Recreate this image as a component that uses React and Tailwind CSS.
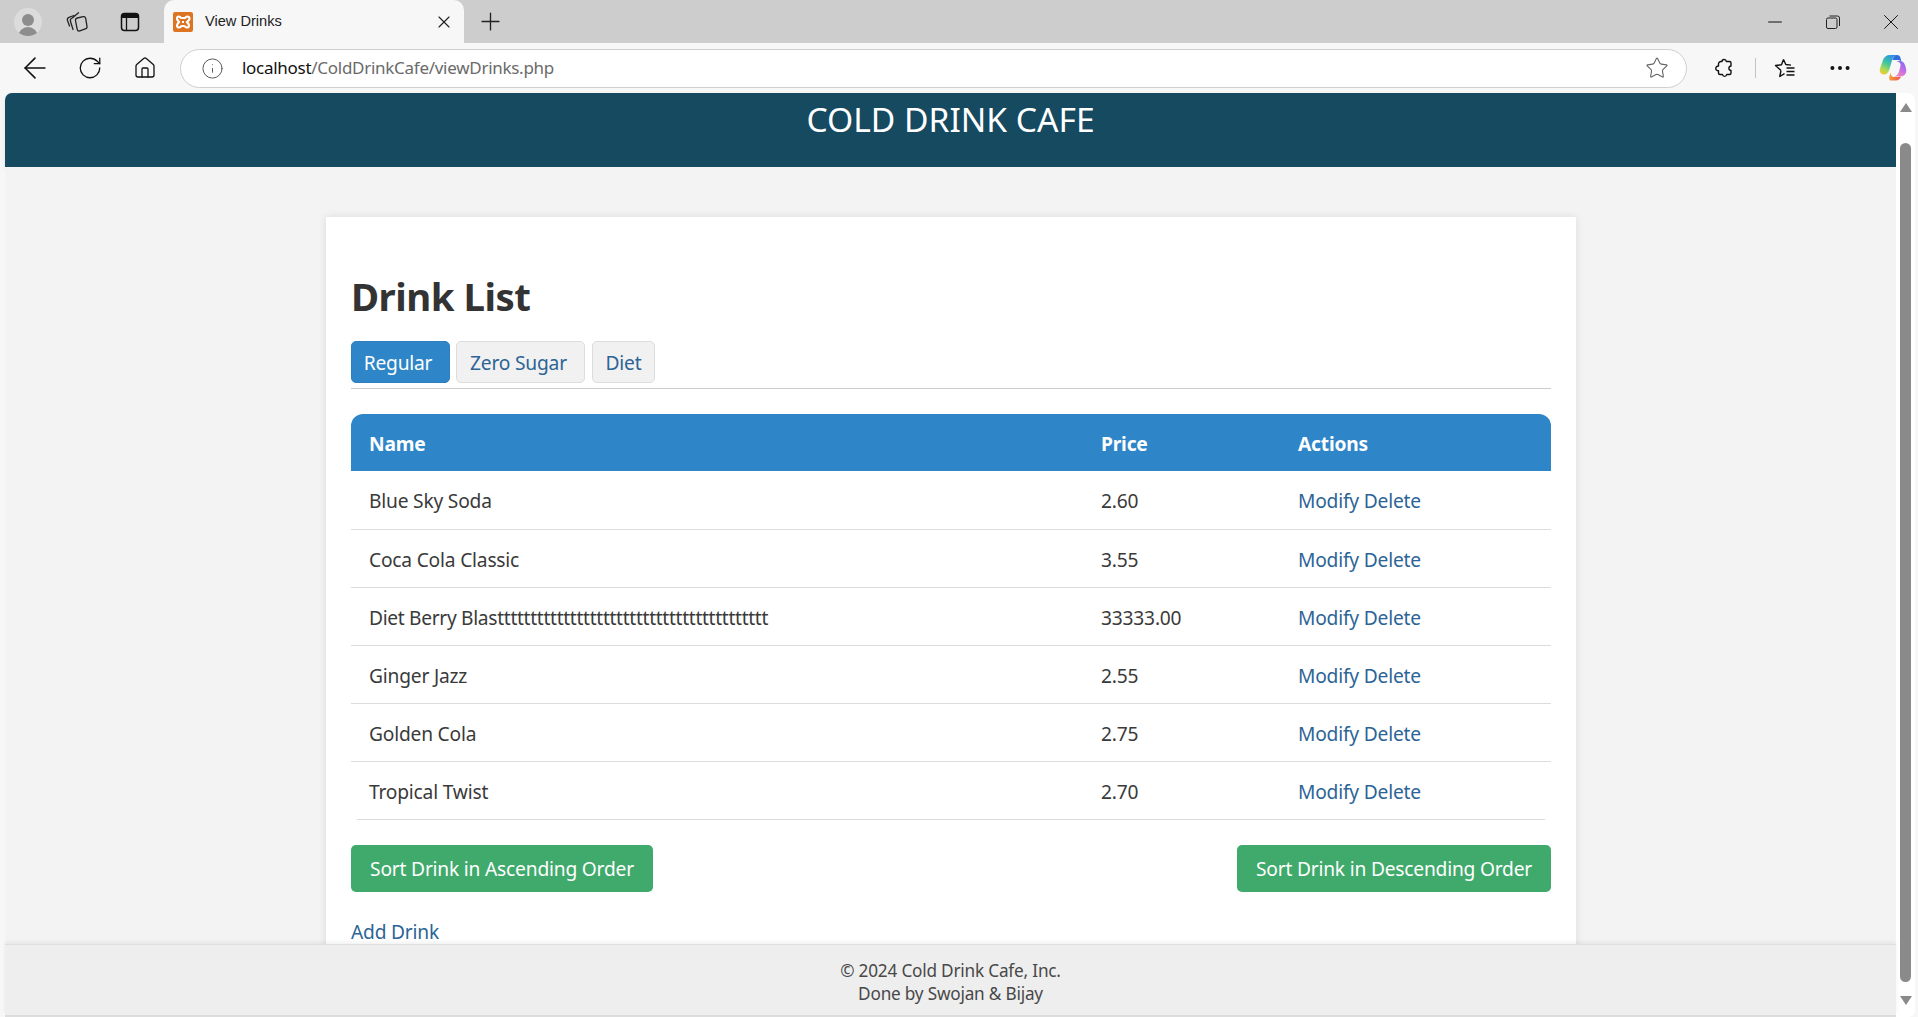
import React from "react";
import { ArrowLeft, RotateCw, House, Info, Star, MoreHorizontal, X, Plus, Minus } from "lucide-react";

const drinks = [
  { name: "Blue Sky Soda", price: "2.60" },
  { name: "Coca Cola Classic", price: "3.55" },
  { name: "Diet Berry Blasttttttttttttttttttttttttttttttttttttttttt", price: "33333.00", tight: true },
  { name: "Ginger Jazz", price: "2.55" },
  { name: "Golden Cola", price: "2.75" },
  { name: "Tropical Twist", price: "2.70" },
];

const CollectionsIcon = () => (
  <svg width="22" height="22" viewBox="0 0 22 22" fill="none" stroke="#222" strokeWidth="1.300" strokeLinecap="round" strokeLinejoin="round">
    <path d="M3.500 15L1.500 9.500C1 8 1.800 6.800 3 6.300L8 4.500" />
    <path d="M7 18.500L4.500 10.500C4 8.800 4.800 7.500 6.300 7L12.500 1.800" />
    <path d="M9.500 9.500c-.2-1.200.5-2.200 1.700-2.500l6-1.300c1.200-.2 2.200.5 2.500 1.700l1.300 8c.2 1.200-.5 2.200-1.700 2.500l-5.500 2c-1.200.3-2.300-.4-2.600-1.600z" />
  </svg>
);

const TabsIcon = () => (
  <svg width="20" height="20" viewBox="0 0 20 20" fill="none">
    <rect x="1.500" y="1.500" width="17" height="17" rx="3" stroke="#111" strokeWidth="1.500" />
    <path d="M1.500 4.500a3 3 0 0 1 3-3h11a3 3 0 0 1 3 3v1.500h-17z" fill="#111" />
    <path d="M6.500 6v12" stroke="#111" strokeWidth="1.300" />
  </svg>
);

const XamppIcon = () => (
  <svg width="20" height="20" viewBox="0 0 20 20">
    <rect width="20" height="20" rx="2" fill="#dd7421" />
    <path
      d="M5.500 4.500c1.500 0 2 1.500 3 1.500h3c1 0 1.500-1.500 3-1.500 2 0 2.500 2 1.500 3.500L14 10l1.500 2c1 1.500.5 3.500-1.500 3.500-1.500 0-2-1.500-3-1.500H9c-1 0-1.500 1.500-3 1.500-2 0-2.500-2-1.500-3.500L6 10 4.500 8c-1-1.500-.5-3.500 1-3.500z"
      fill="none"
      stroke="#fff"
      strokeWidth="2.200"
    />
    <path d="M9 10h2" stroke="#fff" strokeWidth="2" />
  </svg>
);

const RestoreIcon = () => (
  <svg width="14" height="14" viewBox="0 0 14 14" fill="none" stroke="#222" strokeWidth="1">
    <rect x="0.500" y="3" width="10.500" height="10.500" rx="1.500" />
    <path d="M3.500 1h8a2 2 0 0 1 2 2v8" />
  </svg>
);

const PuzzleIcon = () => (
  <svg width="20" height="20" viewBox="0 0 20 20" fill="none" stroke="#111" strokeWidth="1.400" strokeLinejoin="round">
    <path d="M8 3.500C8 1 12 .8 12.300 3.500h3.200a1.500 1.500 0 0 1 1.500 1.500v3c-2.800.3-2.800 4.200 0 4.500v2.500a1.500 1.500 0 0 1-1.500 1.500h-2.800c-.4 2.500-3.800 2.500-4.200 0H6a1.500 1.500 0 0 1-1.500-1.500v-2.200c-3.600 0-3.600-4.800 0-4.800V6A2.500 2.500 0 0 1 7 3.500z" />
  </svg>
);

const FavoritesIcon = () => (
  <svg width="22" height="20" viewBox="0 0 22 20" fill="none" stroke="#111" strokeWidth="1.400" strokeLinejoin="round">
    <path d="M9.500 1.500l2.300 5 5.200.6M7 12.500l-1.200 6 4.700-2.800M7 12.500L1.500 7.500l6-.7 2-5.300" />
    <path d="M12.500 10h8M12.500 13.500h8M12.500 17h8" strokeWidth="1.500" />
  </svg>
);

const CopilotIcon = () => (
  <svg width="28" height="28" viewBox="0 0 28 28">
    <defs>
      <linearGradient id="copilotA" x1="0.700" y1="0" x2="0.200" y2="1">
        <stop offset="0" stopColor="#2b8fe8" />
        <stop offset="0.450" stopColor="#3fc7a0" />
        <stop offset="0.800" stopColor="#b9d94a" />
        <stop offset="1" stopColor="#f4c63a" />
      </linearGradient>
      <linearGradient id="copilotB" x1="0.800" y1="0" x2="0.300" y2="1">
        <stop offset="0" stopColor="#7d6cf0" />
        <stop offset="0.500" stopColor="#c46be6" />
        <stop offset="1" stopColor="#f08ab8" />
      </linearGradient>
      <linearGradient id="copilotC" x1="0" y1="0" x2="1" y2="0">
        <stop offset="0" stopColor="#f6a03a" />
        <stop offset="1" stopColor="#e8504f" />
      </linearGradient>
    </defs>
    <path d="M11 1h7c-3 .5-4 2.500-5 5.500L10.500 15c-1 3.500-2.500 5.500-5.500 5.500-3 0-5-3-4-6L4 6c1-3 3.500-5 7-5z" fill="url(#copilotA)" />
    <path d="M17 7h4c2.500 0 4 1.500 5 4l1 3.500c1 4-1 8-5.500 8H15c3-.5 4.500-3 5.300-6l1.200-5C22 9.500 20 7.500 17 7z" fill="url(#copilotB)" />
    <path d="M11 26.500h6c2 0 4-1.500 5-4-1.500.6-3 .6-5 .6h-2c-2 0-3-1.500-3.500-4l-1 3c-.6 2 -.4 3.500.5 4.400z" fill="url(#copilotC)" />
    <path d="M18 1c2 0 3 1 3.500 3l.8 3.300C21 6.300 19.500 6 17.500 6H13.500C14.500 3 15.500 1 18 1z" fill="#2f6fdc" />
  </svg>
);

function BrowserChrome() {
  return (
    <div className="font-['Noto_Sans',sans-serif]">
      <div className="flex h-[43px] bg-[#cdcdcd] items-center">
        <div className="ml-[14px] w-[28px] h-[28px] rounded-full bg-[#dcdcdc] flex flex-col items-center justify-end overflow-hidden">
          <div className="w-[12px] h-[12px] rounded-full bg-[#8d8d8d] mb-[1px]" />
          <div className="w-[20px] h-[10px] rounded-t-full bg-[#8d8d8d] -mb-[1px]" />
        </div>
        <div className="ml-[24px] flex"><CollectionsIcon /></div>
        <div className="ml-[32px] flex"><TabsIcon /></div>
        <div className="ml-[24px] self-stretch w-[300px] bg-[#f7f7f7] rounded-t-[10px] flex items-center pl-[9px] pr-[10px]">
          <XamppIcon />
          <span className="ml-[12px] text-[14.6px] text-[#222] flex-1 font-['Liberation_Sans',sans-serif]">View Drinks</span>
          <X size={20} strokeWidth={1.400} color="#222" />
        </div>
        <div className="ml-[12px] flex"><Plus size={29} strokeWidth={1.100} color="#222" /></div>
        <div className="flex-1" />
        <Minus size={22} strokeWidth={1.100} color="#111" />
        <div className="ml-[40px] flex"><RestoreIcon /></div>
        <div className="ml-[38px] mr-[14px] flex"><X size={26} strokeWidth={0.900} color="#111" /></div>
      </div>
      <div className="flex h-[50px] bg-[#f7f7f7] items-center">
        <div className="ml-[18px] flex"><ArrowLeft size={34} strokeWidth={1.100} color="#111" /></div>
        <div className="ml-[25px] flex"><RotateCw size={26} strokeWidth={1.200} color="#111" /></div>
        <div className="ml-[30px] flex"><House size={24} strokeWidth={1.300} color="#111" /></div>
        <div className="ml-[23px] w-[1507px] h-[39px] bg-white border border-[#cfcfcf] rounded-full flex items-center pl-[20px] pr-[17px]">
          <Info size={23} strokeWidth={1} color="#555" />
          <span className="ml-[18px] flex-1 text-[17px] tracking-[-0.28px] text-[#6a6a6a]">
            <span className="text-[#111]">localhost</span>/ColdDrinkCafe/viewDrinks.php
          </span>
          <Star size={24} strokeWidth={1.100} color="#666" />
        </div>
        <div className="ml-[27px] flex"><PuzzleIcon /></div>
        <div className="ml-[21px] w-[1px] h-[20px] bg-[#c4c4c4]" />
        <div className="ml-[18px] flex"><FavoritesIcon /></div>
        <div className="ml-[31px] flex"><MoreHorizontal size={26} strokeWidth={1.700} color="#111" /></div>
        <div className="ml-[26px] flex"><CopilotIcon /></div>
      </div>
    </div>
  );
}

function DrinkRow({ drink, last }) {
  const cellBorder = last ? "" : "border-b border-[#dcdcdc]";
  return (
    <tr className="h-[58px]">
      <td className={`pl-[18px] pt-[4px] ${drink.tight ? "tracking-[-0.32px]" : ""} ${cellBorder}`}>{drink.name}</td>
      <td className={`pl-[18px] pt-[4px] ${cellBorder}`}>{drink.price}</td>
      <td className={`pl-[18px] pt-[4px] text-[#2c6496] ${cellBorder}`}>Modify Delete</td>
    </tr>
  );
}

export default function App() {
  return (
    <div className="h-screen w-full overflow-hidden flex flex-col bg-[#f7f7f7]">
      <BrowserChrome />
      <div className="flex-1 min-h-0 flex font-['Noto_Sans',sans-serif] text-[19.2px] tracking-[-0.2px] text-[#3a3a3a]">
        <div className="ml-[5px] w-[1891px] flex flex-col min-h-0">
          <header className="h-[74px] bg-[#164a60] rounded-tl-[7px] text-white text-center text-[33.6px] tracking-normal leading-[53px] shrink-0 shadow-[0_2px_4px_rgba(0,0,0,0.08)]">
            COLD DRINK CAFE
          </header>
          <main className="flex-1 min-h-0 overflow-hidden bg-[#f3f3f3] pt-[50px]">
            <div className="ml-[321px] w-[1250px] bg-white shadow-[0_0_8px_rgba(0,0,0,0.1)] px-[25px] pt-[56px] pb-[20px]">
              <h2 className="text-[38.4px] font-bold leading-[46px] text-[#333] tracking-[-0.5px]">Drink List</h2>
              <div className="mt-[22px] flex gap-[6px] h-[48px] border-b border-[#cccccc] pb-[5px]">
                <span className="w-[99px] flex items-center justify-center pt-[2px] pr-[5px] bg-[#2e86c9] text-white rounded-[5px] border border-[#2e7fbd]">Regular</span>
                <span className="w-[129px] flex items-center justify-center pt-[2px] pr-[4px] bg-[#f1f1f1] text-[#2c6496] rounded-[5px] border border-[#dddddd]">Zero Sugar</span>
                <span className="ml-[1px] w-[63px] flex items-center justify-center pt-[2px] bg-[#f1f1f1] text-[#2c6496] rounded-[5px] border border-[#dddddd]">Diet</span>
              </div>
              <table className="mt-[25px] w-full table-fixed border-collapse">
                <colgroup>
                  <col className="w-[732px]" />
                  <col className="w-[197px]" />
                  <col className="w-[271px]" />
                </colgroup>
                <thead>
                  <tr className="h-[57px] bg-[#2e86c9] text-white text-left">
                    <th className="pl-[18px] pt-[4px] rounded-tl-[12px] font-bold">Name</th>
                    <th className="pl-[18px] pt-[4px] font-bold">Price</th>
                    <th className="pl-[18px] pt-[4px] rounded-tr-[12px] font-bold">Actions</th>
                  </tr>
                </thead>
                <tbody>
                  {drinks.map((drink, i) => (
                    <DrinkRow key={drink.name} drink={drink} last={i === drinks.length - 1} />
                  ))}
                </tbody>
              </table>
              <div className="mx-[6px] h-px bg-[#dcdcdc]" />
              <div className="mt-[25px] flex justify-between">
                <button className="w-[302px] h-[47px] pt-[2px] bg-[#3faa6c] text-white rounded-[5px]">Sort Drink in Ascending Order</button>
                <button className="w-[314px] h-[47px] pt-[2px] bg-[#3faa6c] text-white rounded-[5px]">Sort Drink in Descending Order</button>
              </div>
              <div className="mt-[26px] text-[#2c6496]">Add Drink</div>
            </div>
          </main>
          <footer className="h-[71px] shrink-0 bg-[#eeeeee] border-t border-[#dedede] text-center text-[17.2px] leading-[23px] pt-[14px] text-[#484848] shadow-[0_-2px_4px_rgba(0,0,0,0.06)] relative">
            <div>© 2024 Cold Drink Cafe, Inc.</div>
            <div>Done by Swojan &amp; Bijay</div>
          </footer>
          <div className="h-[2px] bg-[#dddddd] shrink-0" />
        </div>
        <div className="w-[19px] bg-white rounded-tr-[7px] rounded-br-[7px] flex flex-col items-center pt-[10px] pb-[12px]">
          <div className="w-0 h-0 border-x-[6px] border-x-transparent border-b-[9px] border-b-[#8a8a8a]" />
          <div className="mt-[31px] w-[11px] flex-1 bg-[#8a8a8a] rounded-full" />
          <div className="mt-[14px] w-0 h-0 border-x-[6px] border-x-transparent border-t-[9px] border-t-[#8a8a8a]" />
        </div>
      </div>
    </div>
  );
}
